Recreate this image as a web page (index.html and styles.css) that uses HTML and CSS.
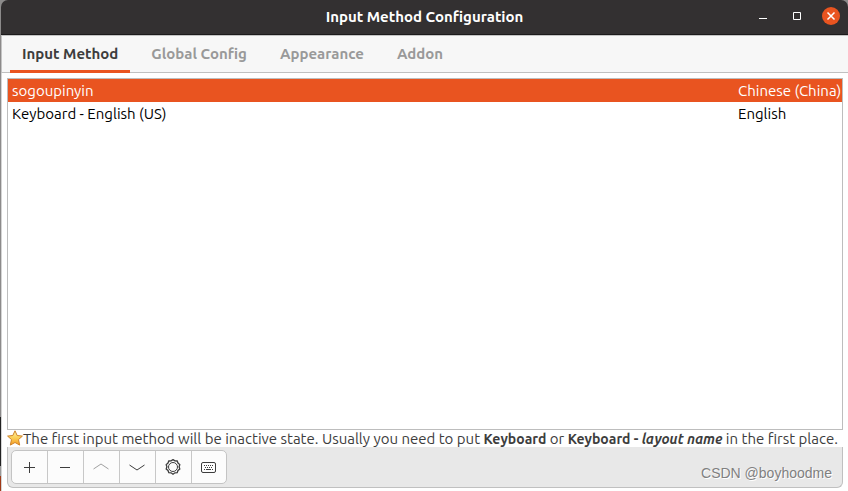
FILE: index.html
```html
<!DOCTYPE html>
<html lang="en">
  <head>
    <meta charset="UTF-8" />
    <meta name="viewport" content="width=device-width, initial-scale=1.0" />
    <title>Input Method Configuration</title>
    <link rel="stylesheet" href="styles.css">
  </head>
  <body>
    <div class="window">
      <!-- Title bar -->
      <header class="titlebar">
        <h1>Input Method Configuration</h1>
        <div class="window-controls">
          <button type="button" class="window-btn" aria-label="Minimize">
            <svg width="18" height="18" viewBox="0 0 18 18">
              <path d="M5 11.5h8" stroke="#fff" />
            </svg>
          </button>
          <button type="button" class="window-btn" aria-label="Maximize">
            <svg width="18" height="18" viewBox="0 0 18 18">
              <path d="M5.5 5.5h7v7h-7z" fill="none" stroke="#fff" />
            </svg>
          </button>
          <button type="button" class="window-btn close" aria-label="Close">
            <svg width="18" height="18" viewBox="0 0 18 18">
              <path d="M5.5 5.500l7 7M12.500 5.500l-7 7" stroke="#fff" stroke-width="1.500" />
            </svg>
          </button>
        </div>
      </header>

      <!-- Tabs -->
      <div class="tabs" role="tablist">
        <button type="button" class="tab active" role="tab" aria-selected="true">Input Method</button>
        <button type="button" class="tab" role="tab" aria-selected="false">Global Config</button>
        <button type="button" class="tab" role="tab" aria-selected="false">Appearance</button>
        <button type="button" class="tab" role="tab" aria-selected="false">Addon</button>
      </div>

      <main class="panel">
        <div class="list">
          <table>
            <tbody>
              <tr class="selected">
                <td>sogoupinyin</td>
                <td class="lang">Chinese (China)</td>
              </tr>
              <tr>
                <td>Keyboard - English (US)</td>
                <td class="lang">English</td>
              </tr>
            </tbody>
          </table>
        </div>

        <div class="hint">
          <svg class="star" width="16" height="16" viewBox="0 0 16 16">
            <defs>
              <linearGradient id="gold" x1="0" y1="0" x2="0" y2="1">
                <stop offset="0" stop-color="#fff3a8" />
                <stop offset="0.5" stop-color="#fbcf56" />
                <stop offset="1" stop-color="#f59a24" />
              </linearGradient>
            </defs>
            <path d="M8 .8l2.200 4.700 5.200.6-3.900 3.500 1.200 5.500L8 12.500l-4.700 2.600 1.200-5.500L.6 6.100l5.200-.6z" fill="url(#gold)" stroke="#cf8328" stroke-linejoin="round" />
          </svg>
          <p>The first input method will be inactive state. Usually you need to put <b>Keyboard</b> or <b>Keyboard - <i>layout name</i></b> in the first place.</p>
        </div>

        <!-- Bottom toolbar -->
        <div class="toolbar">
          <div class="tools">
            <button type="button" class="tool" aria-label="Add">
              <svg width="16" height="16" viewBox="0 0 16 16"><path d="M3 8.500h11M8.500 3v11" /></svg>
            </button>
            <button type="button" class="tool" aria-label="Remove">
              <svg width="16" height="16" viewBox="0 0 16 16"><path d="M3 8.500h10" /></svg>
            </button>
            <button type="button" class="tool" aria-label="Move up" disabled>
              <svg width="16" height="16" viewBox="0 0 16 16"><path d="M.5 10l7.500-5 7.500 5" /></svg>
            </button>
            <button type="button" class="tool" aria-label="Move down">
              <svg width="16" height="16" viewBox="0 0 16 16"><path d="M.5 6L8 11l7.500-5" /></svg>
            </button>
            <button type="button" class="tool" aria-label="Configure">
              <svg width="16" height="16" viewBox="0 0 16 16">
                <circle cx="8" cy="8" r="4.500" />
                <path d="M8 .6l1.900 1.300 2.300.1.800 2.100 1.800 1.500-.7 2.200.7 2.200-1.800 1.500-.8 2.200-2.300.1L8 15.200l-1.900-1.400-2.300-.1L3 11.500 1.200 10l.7-2.200-.7-2.200L3 4.100 3.800 2l2.300-.1z" stroke-width="1.300" />
              </svg>
            </button>
            <button type="button" class="tool" aria-label="Keyboard layout">
              <svg width="16" height="16" viewBox="0 0 16 16">
                <rect x=".5" y="3.500" width="14" height="10" rx="1.500" />
                <path d="M3 6.500h10M4 8.500h8" stroke-dasharray="1 1" />
                <path d="M3 10.500h1M5 10.500h5M11 10.500h1" />
              </svg>
            </button>
          </div>
          <span class="watermark">CSDN @boyhoodme</span>
        </div>
      </main>
    </div>
  </body>
</html>
```
FILE: styles.css
```css
* {
  box-sizing: border-box;
}
body {
  margin: 0;
  background: #fff;
  color: #3d3d3d;
  font-family: Ubuntu, "Noto Sans", sans-serif;
  font-size: 15px;
  line-height: 18px;
}
button {
  margin: 0;
  padding: 0;
  border: none;
  background: none;
  color: inherit;
  font: inherit;
}
svg {
  display: block;
}
/* The desktop shows through as a thin strip on the left */
.window {
  display: flex;
  flex-direction: column;
  min-height: 100vh;
  padding-left: 1px;
  background: linear-gradient(#8c8a8a 85%, #222 85% 95%, #999 95% 97%, #a03a18 97%);
}

/* Title bar */
.titlebar {
  display: grid;
  grid-template-columns: 1fr auto 1fr;
  align-items: center;
  height: 35px;
  padding: 0 8px 2px;
  background: #333031;
  border-bottom: 1px solid #1c1a1b;
  border-radius: 7px 7px 0 0;
}
.titlebar h1 {
  grid-column: 2;
  margin: 0;
  padding-top: 2px;
  color: #fff;
  font-size: 15px;
  font-weight: bold;
}
.window-controls {
  display: flex;
  justify-content: flex-end;
  gap: 16px;
}
.window-btn {
  width: 18px;
  height: 18px;
  border-radius: 50%;
}
.window-btn.close {
  background: #e95420;
}

/* Tabs */
.tabs {
  display: flex;
  gap: 9px;
  height: 38px;
  padding-left: 8px;
  background: #f7f7f7;
  border-top: 1px solid #c4c4c4;
  border-bottom: 1px solid #c0c0c0;
  border-left: 1px solid #c4c4c4;
}
.tab {
  height: 37px;
  padding: 2px 12px 0;
  border-bottom: 3px solid transparent;
  color: #999;
  font-weight: bold;
}
.tab.active {
  color: #3d3d3d;
  border-bottom-color: #e95420;
}

/* Input method list */
.panel {
  display: flex;
  flex: 1;
  flex-direction: column;
  padding: 5px 5px 3px;
  background: #fff;
  border-left: 1px solid #d4d4d4;
}
.list {
  flex: 1;
  border: 1px solid #bdbdbd;
}
.list table {
  width: 100%;
  border-collapse: collapse;
  color: #000;
}
.list td {
  height: 23px;
  padding: 0 0 0 4px;
  white-space: nowrap;
}
.list .lang {
  width: 108px;
}
.list .selected {
  background: #e95420;
  color: #fff;
}
.hint {
  display: flex;
  height: 17px;
  white-space: nowrap;
}
.hint p {
  margin: 0;
}
.hint b {
  font-size: 14px;
}
.star {
  flex-shrink: 0;
}

/* Toolbar */
.toolbar {
  display: flex;
  align-items: center;
  justify-content: space-between;
  padding: 3px 10px 3px 3px;
  background: #e8e8e8;
  border: 1px solid #c0c0c0;
  border-top: none;
  border-radius: 0 0 6px 6px;
}
.tools {
  display: flex;
  background: #fcfcfc;
  border: 1px solid #c4c4c4;
  border-radius: 5px;
}
.tool {
  display: flex;
  align-items: center;
  width: 36px;
  height: 32px;
  padding-left: 9px;
}
.tool:first-child,
.tool:last-child {
  width: 35px;
}
.tool + .tool {
  border-left: 1px solid #c8c8c8;
}
.tool svg {
  fill: none;
  stroke: #3d3d3d;
}
.tool:disabled svg {
  stroke: #a0a0a0;
}
.watermark {
  padding-top: 12px;
  color: #808080;
  font-family: "Liberation Sans", Arial, sans-serif;
  font-size: 14px;
  text-shadow: 1px 1px 0 #fff;
}
```
